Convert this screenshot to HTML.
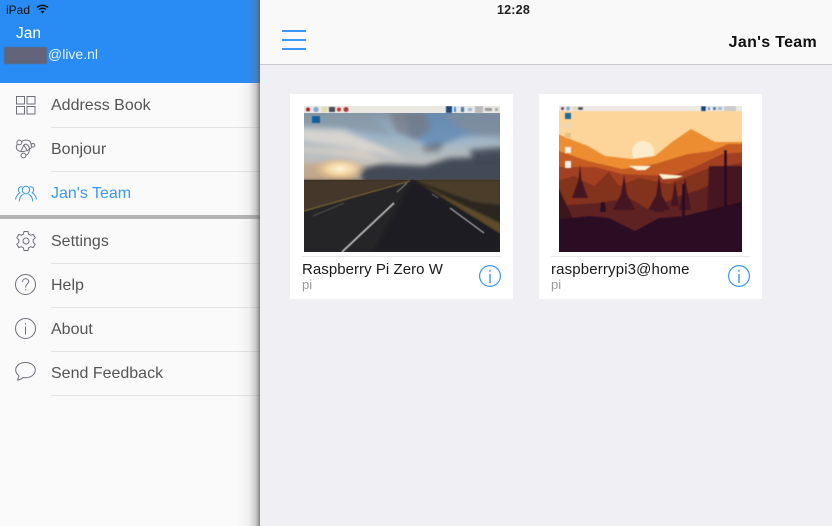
<!DOCTYPE html>
<html><head><meta charset="utf-8">
<style>
html,body{margin:0;padding:0;width:832px;height:526px;overflow:hidden;background:#efeff4;font-family:"Liberation Sans",sans-serif}
.a{position:absolute;white-space:nowrap}
#side{position:absolute;left:0;top:0;width:260px;height:526px;background:#fafafa}
#shadow{position:absolute;left:238px;top:0;width:22px;height:526px;background:linear-gradient(90deg,rgba(120,120,120,0),rgba(120,120,120,.08) 50%,rgba(110,110,110,.35) 82%,rgba(90,90,90,.75) 100%)}
.m{font-size:16px;color:#555;left:51px;line-height:20px}
.l{position:absolute;left:51px;width:209px;height:1px;background:#e3e3e3}
.h{position:absolute;left:282px;width:24px;height:2px;background:#3b97f5}
svg{position:absolute;overflow:visible}
.ic{fill:none;stroke:#6f6f7c;stroke-width:1}
</style></head><body>
<div style="position:absolute;left:260px;top:0;width:572px;height:64px;background:#f9f9f9;border-bottom:1px solid #c8c8ca"></div>
<div class="a" style="left:497px;top:3px;font-size:12.5px;font-weight:bold;color:#222;line-height:15px;letter-spacing:.2px">12:28</div>
<div class="h" style="top:30px"></div><div class="h" style="top:39px"></div><div class="h" style="top:48px"></div>
<div class="a" style="right:15px;top:33px;font-size:16px;font-weight:bold;color:#111;line-height:19px;letter-spacing:.3px">Jan's Team</div>

<div id="side">
<div style="position:absolute;left:0;top:0;width:260px;height:83px;background:#288cf4"></div>
<div class="a" style="left:6px;top:3px;font-size:12px;color:#111;line-height:14px">iPad</div>
<svg style="left:36px;top:4px" width="13" height="10" viewBox="0 0 13 10"><path d="M1 3.5C4 .6 9 .6 12 3.5M3 5.6C5 3.8 8 3.8 10 5.6" fill="none" stroke="#111" stroke-width="1.5"/><path d="M6.5 9.5L4.6 7.4C5.7 6.6 7.3 6.6 8.4 7.4Z" fill="#111"/></svg>
<div class="a" style="left:16px;top:25px;font-size:15.5px;color:#fff;line-height:18px">Jan</div>
<div style="position:absolute;left:4px;top:47px;width:43px;height:17px;background:#636479;filter:blur(.5px)"></div>
<div class="a" style="left:48px;top:46px;font-size:14px;color:#e8f2fe;line-height:17px">@live.nl</div>

<div class="a m" style="top:96px">Address Book</div>
<div class="l" style="top:127px"></div>
<div class="a m" style="top:140px">Bonjour</div>
<div class="l" style="top:171px"></div>
<div class="a m" style="top:184px;color:#3b97f5">Jan's Team</div>
<div style="position:absolute;left:0;top:215px;width:260px;height:4px;background:#b4b4b4"></div>
<div class="a m" style="top:232px">Settings</div>
<div class="l" style="top:263px"></div>
<div class="a m" style="top:276px">Help</div>
<div class="l" style="top:307px"></div>
<div class="a m" style="top:320px">About</div>
<div class="l" style="top:351px"></div>
<div class="a m" style="top:364px">Send Feedback</div>
<div class="l" style="top:395px"></div>

<svg class="ic" style="left:16px;top:96px" width="20" height="19"><rect x=".5" y=".5" width="8" height="7.5"/><rect x="11" y=".5" width="8" height="7.5"/><rect x=".5" y="10.5" width="8" height="7.5"/><rect x="11" y="10.5" width="8" height="7.5"/></svg>
<svg class="ic" style="left:15px;top:139px" width="21" height="21" viewBox="0 0 21 21" stroke-width=".9"><circle cx="4.3" cy="3.5" r="2.4"/><circle cx="18" cy="6.3" r="1.8"/><circle cx="8.5" cy="16.5" r="2.4"/><path d="M6.6 2.5C9 .6 14 .6 15.5 3.2C16.2 4.5 16.2 5.6 16.2 6.4M2.5 5.2C.8 7 1 10 3 11.5C6 13.5 11 12.5 14 10.5C15.5 9.5 16.4 8.6 16.8 7.8M10.8 16.3C13.5 15.5 15 12 14.2 8.5C13.6 6 11 4 8.8 6L5.8 12.2M8.8 6L12.5 12"/></svg>
<svg style="left:15px;top:185px;fill:none;stroke:#3b97f5;stroke-width:1" width="22" height="18"><circle cx="11" cy="5" r="3.7"/><path d="M4.2 16.5C4.5 12.5 6.5 10 8.6 9.2M17.8 16.5C17.5 12.5 15.5 10 13.4 9.2"/><path d="M7.4 2C5.2 1 3 2.8 3.4 5.4C3.6 6.7 4.2 7.4 4.8 7.9C2.4 9 1 11.5 .5 14.5M14.6 2C16.8 1 19 2.8 18.6 5.4C18.4 6.7 17.8 7.4 17.2 7.9C19.6 9 21 11.5 21.5 14.5"/></svg>
<svg class="ic" style="left:15px;top:230px" width="22" height="22" viewBox="0 0 22 22"><path d="M9 1.5H13L13.6 4.2L15.6 5.3L18.2 4.4L20.2 7.8L18.2 9.7V12.3L20.2 14.2L18.2 17.6L15.6 16.7L13.6 17.8L13 20.5H9L8.4 17.8L6.4 16.7L3.8 17.6L1.8 14.2L3.8 12.3V9.7L1.8 7.8L3.8 4.4L6.4 5.3L8.4 4.2Z" stroke-linejoin="round"/><circle cx="11" cy="11" r="3"/></svg>
<svg class="ic" style="left:15px;top:274px" width="22" height="22"><circle cx="10.5" cy="10.5" r="10"/><path d="M7.5 8C7.5 5.8 9 4.8 10.6 4.8C12.4 4.8 13.7 6 13.7 7.6C13.7 9.8 10.7 10 10.7 12.6V13.6"/><path d="M10.7 15V16.4"/></svg>
<svg class="ic" style="left:15px;top:318px" width="22" height="22"><circle cx="10.5" cy="10.5" r="10"/><path d="M10.5 8.5V16.5M10.5 5V6.5"/></svg>
<svg class="ic" style="left:15px;top:362px" width="22" height="20"><path d="M10.5 .5C5 .5 .7 3.6 .7 8C.7 10.4 2 12.3 3.8 13.6C3.8 15 3.2 16.6 2.5 18C4.8 17.8 6.8 16.8 8 15.5C8.8 15.6 9.6 15.7 10.5 15.7C16 15.7 20.3 12.4 20.3 8C20.3 3.6 16 .5 10.5 .5Z"/></svg>
</div>
<div id="shadow"></div>

<!-- Card 1 -->
<div style="position:absolute;left:290px;top:94px;width:223px;height:205px;background:#fff"></div>
<svg style="left:304px;top:106px;overflow:hidden" width="196" height="146" viewBox="0 0 196 146">
<defs>
<linearGradient id="s1" x1="0" y1="0" x2="0" y2="1"><stop offset="0" stop-color="#7e909f"/><stop offset=".4" stop-color="#9bb3c6"/><stop offset=".75" stop-color="#bfc0bd"/><stop offset="1" stop-color="#a49384"/></linearGradient>
<radialGradient id="sun"><stop offset="0" stop-color="#fff4d8"/><stop offset=".45" stop-color="#fbdca6" stop-opacity=".85"/><stop offset="1" stop-color="#e3b27a" stop-opacity="0"/></radialGradient>
<filter id="b1" x="-20%" y="-20%" width="140%" height="140%"><feGaussianBlur stdDeviation="3"/></filter>
<filter id="b0" x="-20%" y="-20%" width="140%" height="140%"><feGaussianBlur stdDeviation=".5"/></filter>
<filter id="bg" x="-20%" y="-20%" width="140%" height="140%"><feGaussianBlur stdDeviation="1.4"/></filter>
</defs>
<rect width="196" height="76" fill="url(#s1)"/>
<g filter="url(#b1)">
<path d="M100 5H210V28L160 30L130 42L105 30Z" fill="#5d87b2" opacity=".75"/>
<path d="M85 5L120 5L128 22L112 34L92 26Z" fill="#77777f" opacity=".65"/>
<path d="M-10 5H60L90 30L40 22L-10 18Z" fill="#8795a4" opacity=".6"/>
<path d="M-10 22L40 24L80 42L100 52L50 42L-10 34Z" fill="#e6dcd2" opacity=".8"/>
<path d="M-10 40L60 44L80 56L20 48L-10 46Z" fill="#e0d3c6" opacity=".75"/>
<path d="M140 8L210 5V34L165 28Z" fill="#8b8c8e" opacity=".55"/>
<path d="M118 40L140 36L135 46L120 46Z" fill="#5f6068" opacity=".6"/>
<path d="M165 44L210 40V56L172 56Z" fill="#3f4656" opacity=".9"/>
<path d="M55 64L75 58L120 60L145 52L210 50V78H60Z" fill="#3c4452" opacity=".95"/>
<path d="M-10 56L40 58L55 78H-10Z" fill="#c4a888" opacity=".8"/>
</g>
<ellipse cx="36" cy="63" rx="28" ry="12" fill="url(#sun)"/>
<rect y="74" width="196" height="72" fill="#2c261e"/>
<g filter="url(#bg)">
<path d="M-8 74H106L-8 108Z" fill="#453829"/>
<path d="M110 74H206V100L170 96Z" fill="#4c3e2a"/>
<path d="M116 78L206 122V136Z" fill="#5e4c2c"/>
</g>
<path d="M108 74L0 105V146H196V128Z" fill="#252427"/>
<path d="M108 74L70 146H196V128Z" fill="#1d1d20" filter="url(#bg)"/>
<path d="M0 74.5H196" stroke="#6b5a46" stroke-width="1.4" filter="url(#b0)"/>
<g filter="url(#b0)">
<path d="M38 146L90 97" stroke="#c8c8c8" stroke-width="1.6" fill="none"/>
<path d="M93 86L103 77" stroke="#aaa" stroke-width=".8"/>
<path d="M146 102L180 127" stroke="#cdcdcd" stroke-width="1"/>
<path d="M128 88L134 92" stroke="#999" stroke-width=".7"/>
<path d="M9 110L40 97" stroke="#5c5c5c" stroke-width=".7"/>
<path d="M0 105L106 75" stroke="#7d6534" stroke-width="1.2"/>
</g>
<rect width="196" height="7" fill="#ebe7e3"/>
<g filter="url(#b0)">
<circle cx="4" cy="3.5" r="2" fill="#a3212c"/><circle cx="12" cy="3.5" r="2.6" fill="#7fa9d8"/><rect x="18" y="1" width="5" height="5" fill="#e0dba8"/><rect x="25" y="1" width="6" height="5" fill="#4a4c55"/><circle cx="35" cy="3.5" r="2" fill="#c33"/><circle cx="42" cy="3.5" r="2.5" fill="#a83a36"/>
<rect x="142" y="0" width="6" height="7" fill="#1d4676"/><rect x="150" y="1" width="2" height="5" fill="#3a8ae0"/><rect x="157" y="1" width="3" height="5" fill="#47a"/><rect x="164" y="2" width="4" height="3" fill="#9bd"/><rect x="171" y="0" width="8" height="7" fill="#bbb"/><rect x="181" y="2" width="7" height="3" fill="#999"/><rect x="191" y="2" width="3" height="3" fill="#aaa"/>
<rect x="8" y="10" width="8" height="7" fill="#185f9e"/>
</g>
</svg>
<div style="position:absolute;left:302px;top:256px;width:199px;height:1px;background:#e8e8e8"></div>
<div class="a" style="left:302px;top:261px;font-size:15px;color:#1a1a1a;line-height:18px;letter-spacing:.05px">Raspberry Pi Zero W</div>
<div class="a" style="left:302px;top:277px;font-size:13px;color:#999;line-height:15px">pi</div>
<svg style="left:479px;top:265px" width="22" height="22"><circle cx="11" cy="11" r="10.4" fill="none" stroke="#3b97f5" stroke-width="1.2"/><path d="M11 9V18M11 4.7V6.7" stroke="#3b97f5" stroke-width="1.4"/></svg>

<!-- Card 2 -->
<div style="position:absolute;left:539px;top:94px;width:223px;height:205px;background:#fff"></div>
<svg style="left:559px;top:106px;overflow:hidden" width="183" height="146" viewBox="0 0 183 146">
<defs><filter id="b2" x="-10%" y="-10%" width="120%" height="120%"><feGaussianBlur stdDeviation=".6"/></filter></defs>
<rect width="183" height="146" fill="#fdd59a"/>
<g filter="url(#b2)">
<circle cx="84" cy="46" r="11" fill="#fdeccb"/>
<path d="M-6 26L16 35L29 40L46 50L73 53L96 50L113 36L132 23L156 36L190 36V100H-6Z" fill="#ec8d30"/>
<path d="M-6 43L29 55L63 63L96 58L129 48L153 45L169 38L190 38V100H-6Z" fill="#c75c20"/>
<path d="M-6 61L36 61L63 68L113 70L136 61L163 48L190 46V110H-6Z" fill="#a33f20"/>
<path d="M-6 76L15 70L35 80L50 66L60 80L80 72L110 78L130 70L150 62L190 56V120H-6Z" fill="#83301f"/>
<path d="M70 60L92 60L86 64L78 64ZM100 68L124 70L118 72L104 73Z" fill="#fff2d2"/>
<path d="M-6 100L40 97L70 92L90 104L120 90L140 84L190 60V152H-6Z" fill="#5e2022"/>
<path d="M60 102L65 68L70 102ZM54 104L65 82L76 104ZM95 106L100 68L105 106ZM89 104L100 84L111 104ZM18 88L21 58L24 88ZM13 92L21 70L29 92ZM112 100L116 74L120 100ZM120 104L126 72L132 104Z" fill="#441720"/>
<path d="M-6 70L8 100L20 125H-6Z" fill="#3c141e"/>
<path d="M150 60H190V110H148Z" fill="#451720"/>
<path d="M165 44H168V100H165ZM123 78H126V118H123Z" fill="#2a1020"/>
<path d="M42 96H46L47 106H41Z" fill="#2a1020"/>
<path d="M-6 114L30 110L50 112L76 125L100 112L125 110L190 94V152H-6Z" fill="#2a1020"/>
</g>
<g filter="url(#b2)">
<rect x="-5" y="-5" width="193" height="10" fill="#ece9e6"/>
<circle cx="3.5" cy="2.5" r="1.6" fill="#7a2a34"/><circle cx="9" cy="2.5" r="2" fill="#7fa9d8"/><rect x="14" y="1" width="4" height="3" fill="#e0dba8"/><rect x="19" y="1" width="5" height="3" fill="#4a4c55"/>
<rect x="142" y="0" width="5" height="5" fill="#1d4676"/><rect x="149" y="1" width="2" height="3" fill="#3a8ae0"/><rect x="154" y="1" width="3" height="3" fill="#47a"/><rect x="159" y="1" width="4" height="3" fill="#9bd"/><rect x="165" y="0" width="12" height="5" fill="#ccc"/>
<rect x="6" y="7" width="6" height="6" fill="#1f6a9e"/><rect x="6" y="17" width="6" height="5" fill="#e6d9ba"/><rect x="6" y="27" width="6" height="5" fill="#e4c284"/><rect x="6" y="41" width="6" height="6" fill="#f5f0e6"/><rect x="6" y="55" width="6" height="7" fill="#f5f0e6"/>
</g>
</svg>
<div style="position:absolute;left:551px;top:256px;width:199px;height:1px;background:#e8e8e8"></div>
<div class="a" style="left:551px;top:261px;font-size:15px;color:#1a1a1a;line-height:18px;letter-spacing:.15px">raspberrypi3@home</div>
<div class="a" style="left:551px;top:277px;font-size:13px;color:#999;line-height:15px">pi</div>
<svg style="left:728px;top:265px" width="22" height="22"><circle cx="11" cy="11" r="10.4" fill="none" stroke="#3b97f5" stroke-width="1.2"/><path d="M11 9V18M11 4.7V6.7" stroke="#3b97f5" stroke-width="1.4"/></svg>
</body></html>
